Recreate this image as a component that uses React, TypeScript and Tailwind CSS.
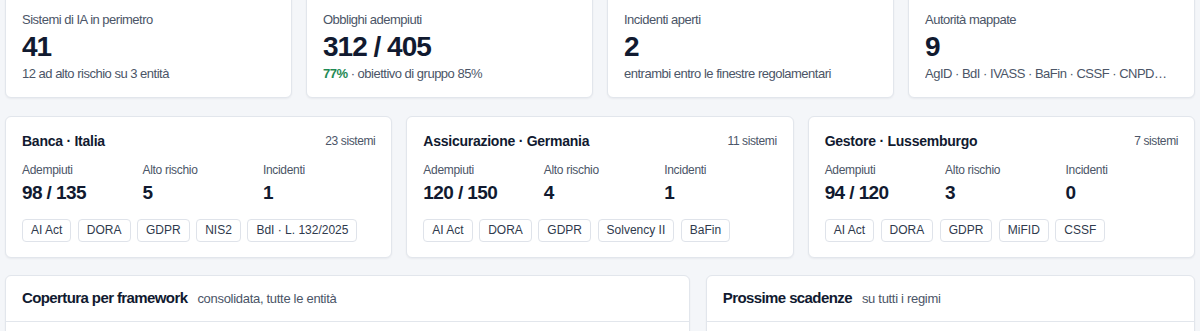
import { ReactNode } from "react";

type Kpi = { label: string; value: string; sub: ReactNode };

const kpis: Kpi[] = [
  { label: "Sistemi di IA in perimetro", value: "41", sub: "12 ad alto rischio su 3 entità" },
  {
    label: "Obblighi adempiuti",
    value: "312 / 405",
    sub: (
      <>
        <span className="font-semibold text-[#1f8a55]">77%</span> · obiettivo di gruppo 85%
      </>
    ),
  },
  { label: "Incidenti aperti", value: "2", sub: "entrambi entro le finestre regolamentari" },
  { label: "Autorità mappate", value: "9", sub: "AgID · BdI · IVASS · BaFin · CSSF · CNPD…" },
];

const entities = [
  {
    name: "Banca · Italia",
    systems: "23 sistemi",
    done: "98 / 135",
    high: "5",
    incidents: "1",
    tags: ["AI Act", "DORA", "GDPR", "NIS2", "BdI · L. 132/2025"],
  },
  {
    name: "Assicurazione · Germania",
    systems: "11 sistemi",
    done: "120 / 150",
    high: "4",
    incidents: "1",
    tags: ["AI Act", "DORA", "GDPR", "Solvency II", "BaFin"],
  },
  {
    name: "Gestore · Lussemburgo",
    systems: "7 sistemi",
    done: "94 / 120",
    high: "3",
    incidents: "0",
    tags: ["AI Act", "DORA", "GDPR", "MiFID", "CSSF"],
  },
];

const card = "rounded-md border border-[#e2e6ec] bg-white shadow-[0_1px_2px_rgba(15,23,42,0.05)]";

const Stat = ({ label, value }: { label: string; value: string }) => (
  <div>
    <div className="text-[12px] leading-4 tracking-[-0.3px] text-[#4b5567]">{label}</div>
    <div className="mt-[3px] text-[19px] font-bold leading-6 tracking-[-0.6px] text-[#111a30]">{value}</div>
  </div>
);

const PanelHeader = ({ title, sub }: { title: string; sub: string }) => (
  <div className={card + " overflow-hidden"}>
    <div className="flex h-[46px] items-center gap-[10px] border-b border-[#e2e6ec] px-4">
      <span className="text-[15px] font-bold tracking-[-0.6px] text-[#111a30]">{title}</span>
      <span className="text-[13px] tracking-[-0.3px] text-[#4b5567]">{sub}</span>
    </div>
    <div className="h-[120px]" />
  </div>
);

export default function App() {
  return (
    <div className="h-[331px] overflow-hidden bg-[#f4f6f9] px-[5px] font-['Liberation_Sans',Arial,sans-serif]">
      <div className="-mt-[7px] grid grid-cols-4 gap-[14px]">
        {kpis.map((k) => (
          <div key={k.label} className={card + " px-4 pt-4 pb-[14px]"}>
            <div className="text-[13px] leading-5 tracking-[-0.5px] text-[#4b5567]">{k.label}</div>
            <div className="text-[28px] font-bold leading-[34px] tracking-[-1px] text-[#111a30]">{k.value}</div>
            <div className="mt-px truncate text-[13px] leading-[18px] tracking-[-0.5px] text-[#4b5567]">{k.sub}</div>
          </div>
        ))}
      </div>

      <div className="mt-[18px] grid grid-cols-3 gap-[14px]">
        {entities.map((e) => (
          <div key={e.name} className={card + " px-4 pt-[14px] pb-[15px]"}>
            <div className="flex items-center justify-between leading-5">
              <span className="text-[14px] font-bold tracking-[-0.25px] text-[#111a30]">{e.name}</span>
              <span className="text-[12px] tracking-[-0.4px] text-[#4b5567]">{e.systems}</span>
            </div>
            <div className="mt-[11px] grid grid-cols-3 gap-x-2">
              <Stat label="Adempiuti" value={e.done} />
              <Stat label="Alto rischio" value={e.high} />
              <Stat label="Incidenti" value={e.incidents} />
            </div>
            <div className="mt-[14px] flex flex-wrap gap-[6.5px]">
              {e.tags.map((t) => (
                <span
                  key={t}
                  className="rounded border border-[#dfe3ea] bg-white px-2 py-[3px] text-[12px] leading-[15px] text-[#2f3a4d]"
                >
                  {t}
                </span>
              ))}
            </div>
          </div>
        ))}
      </div>

      <div className="mt-[17px] grid grid-cols-[1.4fr_1fr] gap-4">
        <PanelHeader title="Copertura per framework" sub="consolidata, tutte le entità" />
        <PanelHeader title="Prossime scadenze" sub="su tutti i regimi" />
      </div>
    </div>
  );
}
